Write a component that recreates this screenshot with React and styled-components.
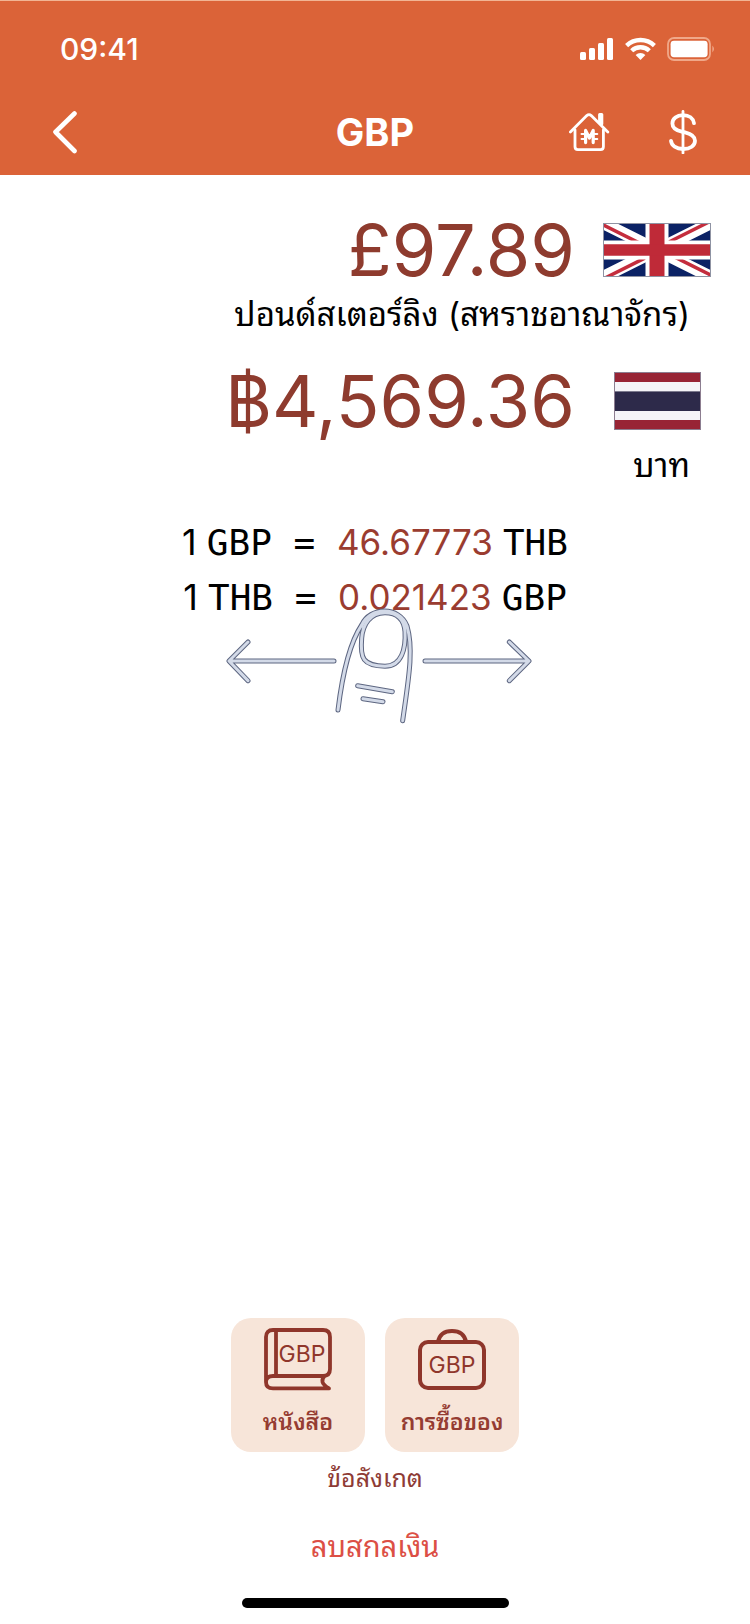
import React from "react"
import styled, { createGlobalStyle } from "styled-components"

const GlobalStyle = createGlobalStyle`
  * {
    box-sizing: border-box;
  }
  body {
    margin: 0;
    background: #fff;
    color: #000;
    font-family: Inter, "Noto Sans Thai Looped", "Noto Sans Thai", "Noto Sans", sans-serif;
  }
  button {
    padding: 0;
    border: 0;
    background: none;
    color: inherit;
    font: inherit;
    cursor: pointer;
  }
  svg {
    display: block;
  }
`;

const Screen = styled.div`
  display: flex;
  flex-direction: column;
  min-height: 100vh;
`;

const Header = styled.header`
  padding-bottom: 7px;
  border-top: 1px solid #f2b594;
  background: #db6338;
  color: #fff;
`;

const StatusBar = styled.div`
  display: flex;
  align-items: center;
  justify-content: space-between;
  height: 95px;
  padding: 0 34px 0 60px;
  font-size: 30px;
  font-weight: 500;
`;

const StatusIcons = styled.div`
  display: flex;
  align-items: center;
  gap: 11px;
`;

const NavBar = styled.nav`
  display: grid;
  grid-template-columns: 1fr auto 1fr;
  align-items: center;
  height: 72px;
  padding: 0 46px;
`;

const Title = styled.h1`
  margin: 0;
  font-size: 38px;
  line-height: 44px;
  font-weight: 700;
`;

const NavActions = styled.div`
  display: flex;
  align-items: center;
  justify-content: flex-end;
  gap: 58px;
`;

const IconButton = styled.button`
  justify-self: start;
  width: ${(props) => props.$width}px;
`;

const Main = styled.main`
  flex: 1;
  padding-top: 32px;
`;

const AmountBlock = styled.section`
  height: 151px;
  padding-right: 39px;
`;

const AmountRow = styled.div`
  display: flex;
  align-items: center;
  justify-content: flex-end;
  gap: 28px;
  height: 86px;
`;

const Amount = styled.div`
  color: #8e3b2e;
  font-size: 72px;
  line-height: 86px;
`;

const FlagSlot = styled.div`
  display: flex;
  justify-content: center;
  width: 108px;
`;

const CurrencyName = styled.p`
  margin: 0;
  padding-right: 21px;
  font-size: 33px;
  line-height: 42px;
  text-align: right;
`;

const Rates = styled.div`
  display: flex;
  flex-direction: column;
  align-items: center;
  gap: 34px;
  padding-top: 23px;
`;

const Rate = styled.p`
  margin: 0;
  font-size: 36px;
  line-height: 20px;
  white-space: pre;
`;

const Code = styled.span`
  font-family: "DejaVu Sans Mono", monospace;
`;

const RateValue = styled.span`
  color: #9a3c30;
  font-size: 35px;
`;

const Gesture = styled.div`
  display: flex;
  justify-content: center;
`;

const Footer = styled.footer`
  display: flex;
  flex-direction: column;
  align-items: center;
  padding-bottom: 16px;
`;

const Cards = styled.div`
  display: flex;
  gap: 20px;
`;

const Card = styled.button`
  display: flex;
  flex-direction: column;
  align-items: center;
  justify-content: space-between;
  width: 134px;
  height: 134px;
  border-radius: 20px;
  && {
    padding: 9px 0 13px;
    background: #f7e5d9;
    color: #953c32;
    font-size: 23px;
    line-height: 34px;
    font-weight: 600;
  }
`;

const TextButton = styled.button`
  && {
    color: ${(props) => props.$color};
    font-size: ${(props) => props.$size}px;
    line-height: 40px;
    margin-top: ${(props) => props.$top}px;
  }
`;

const HomeIndicator = styled.div`
  width: 267px;
  height: 10px;
  margin-top: 31px;
  border-radius: 5px;
  background: #000;
`;

const SignalIcon = () => (
  <svg width="34" height="24" viewBox="0 0 34 24" fill="#fff" aria-hidden="true">
    <rect x="0" y="15" width="6" height="8" rx="1.5" />
    <rect x="9" y="11" width="6" height="12" rx="1.5" />
    <rect x="18" y="6" width="6" height="17" rx="1.5" />
    <rect x="27" y="1" width="6" height="22" rx="1.5" />
  </svg>
);

const WifiIcon = () => (
  <svg width="31" height="24" viewBox="0 0 31 24" aria-hidden="true">
    <g fill="none" stroke="#fff" strokeWidth="4.4">
      <path d="M1.6 8.6 A20 20 0 0 1 29.4 8.6" />
      <path d="M6.7 13.8 A12.6 12.6 0 0 1 24.3 13.8" />
    </g>
    <path d="M10.6 18 A7.2 7.2 0 0 1 20.4 18 L15.5 23 Z" fill="#fff" />
  </svg>
);

const BatteryIcon = () => (
  <svg width="49" height="24" viewBox="0 0 49 24" aria-hidden="true">
    <rect x="1" y="1" width="42" height="22" rx="6" fill="none" stroke="#f0a889" strokeWidth="1.8" />
    <rect x="3.6" y="3.8" width="37" height="16.4" rx="3.4" fill="#fff" />
    <path d="M45.4 8.6 Q48.6 12 45.4 15.4 Z" fill="#f0a889" />
  </svg>
);

const BackIcon = () => (
  <svg width="36" height="44" viewBox="0 0 36 44" aria-hidden="true">
    <path d="M28.5 3.5 L9.5 22 L28.5 41" fill="none" stroke="#fff" strokeWidth="4.6" strokeLinecap="round" strokeLinejoin="round" />
  </svg>
);

const HomeIcon = () => (
  <svg width="42" height="40" viewBox="-1 0 42 40" fill="none" stroke="#fff" strokeLinecap="round" strokeLinejoin="round" aria-hidden="true">
    <path d="M1.4 20 L17.8 3.6 Q20 1.6 22.2 3.6 L38.8 20" strokeWidth="2.8" />
    <path d="M6 18 V34.8 Q6 37.6 8.8 37.6 H31.6 Q34.4 37.6 34.4 34.8 V18" strokeWidth="2.8" />
    <path d="M30.6 2.6 H32.8 V12 L30.6 10 Z" fill="#fff" strokeWidth="3" />
    <path d="M16.6 30.6 V18.4 L20.4 26 L24.2 18.4 V30.6" strokeWidth="3.2" />
    <path d="M12.6 22 H16 M12.6 27 H16 M25 22 H28.2 M25 27 H28.2" strokeWidth="2.2" />
  </svg>
);

const DollarIcon = () => (
  <svg width="30" height="44" viewBox="0 0 30 44" fill="none" stroke="#fff" strokeLinecap="round" aria-hidden="true">
    <path d="M26 13.2 C25.2 8.4 21 5.2 15 5.2 C8.8 5.2 4.4 8.6 4.4 13.4 C4.4 18 7.6 20.2 13.8 21.6 L17 22.4 C23.8 24 27 26.6 27 30.8 C27 35.8 22.2 39 15.2 39 C8.2 39 3.6 35.8 3 30.8" strokeWidth="3.8" />
    <path d="M15 1.5 V43" strokeWidth="2.8" />
  </svg>
);

const FlagUK = () => (
  <svg width="108" height="54" viewBox="0 0 108 54" role="img" aria-label="GBP">
    <rect width="108" height="54" fill="#0b2265" />
    <path d="M0 0 L108 54 M108 0 L0 54" stroke="#fff" strokeWidth="12" />
    <g stroke="#c42d3d" strokeWidth="3.6">
      <path d="M0 1.8 L50 26.8 M108 52.2 L58 27.2" />
      <path d="M106 -1 L54 25 M2 55 L54 29" />
    </g>
    <path d="M54 0 V54" stroke="#fff" strokeWidth="23" />
    <path d="M0 27 H108" stroke="#fff" strokeWidth="19" />
    <path d="M54 0 V54" stroke="#bf2a38" strokeWidth="15" />
    <path d="M0 27 H108" stroke="#bf2a38" strokeWidth="11.4" />
    <rect x="0.5" y="0.5" width="107" height="53" fill="none" stroke="#8f93a3" />
  </svg>
);

const FlagThailand = () => (
  <svg width="87" height="58" viewBox="0 0 87 58" role="img" aria-label="THB">
    <rect width="87" height="58" fill="#982435" />
    <rect y="10" width="87" height="38" fill="#f5f4f8" />
    <rect y="19.4" width="87" height="19.6" fill="#2d2a4a" />
    <rect x="0.5" y="0.5" width="86" height="57" fill="none" stroke="#8c7d90" />
  </svg>
);

// arrows, finger, nail and knuckle lines: stroked twice to get the outline
const swipeShape = (
  <>
    <path d="M522 453 H208 M264 396 L207 453 L264 512" />
    <path d="M795 453 H1106 M1048 396 L1107 453 L1048 512" />
    <path d="M534 600 C545 510 565 405 605 345 C630 289 718 288 741 348 C762 420 745 510 728 632" />
    <path d="M675 308 C630 308 608 345 605 385 C600 445 608 467 675 469 C725 469 738 415 735 365 C732 325 710 308 675 308 Z" />
    <path d="M593 527 L697 545 M609 566 L669 575" />
  </>
);

const SwipeHint = () => (
  <svg width="318" height="118" viewBox="168 294 954 354" fill="none" strokeLinecap="round" strokeLinejoin="round" aria-hidden="true">
    <g stroke="#5d6681" strokeWidth="15">{swipeShape}</g>
    <g stroke="#d3dae8" strokeWidth="9">{swipeShape}</g>
    <path d="M605 345 C630 289 718 288 741 348 L736 366 C732 325 710 308 675 308 C630 308 609 340 606 364 Z" fill="#d3dae8" />
  </svg>
);

const BookIcon = () => (
  <svg width="68" height="64" viewBox="0 0 68 64" fill="none" stroke="#8f362b" strokeWidth="3.8" strokeLinejoin="round" aria-hidden="true">
    <path d="M2 55 V10 Q2 3 9 3 H59 Q66 3 66 10 V42 Q66 49 59 49 H9 Q2 49 2 55 Q2 61.4 9 61.4 H65 Q54 55 61 48.6" />
    <path d="M12 3 V49" />
    <text x="38" y="35" fontSize="23" fontWeight="400" textAnchor="middle" fill="#8f362b" stroke="none">GBP</text>
  </svg>
);

const BagIcon = () => (
  <svg width="68" height="64" viewBox="0 0 68 64" fill="none" stroke="#8f362b" strokeWidth="4" aria-hidden="true">
    <rect x="2" y="15" width="64" height="46" rx="8" />
    <path d="M20 15 Q22 4 34 4 Q46 4 48 15" />
    <text x="34" y="46" fontSize="23" fontWeight="400" textAnchor="middle" fill="#8f362b" stroke="none">GBP</text>
  </svg>
);

const AppHeader = () => (
  <Header>
    <StatusBar>
      <span>09:41</span>
      <StatusIcons>
        <SignalIcon />
        <WifiIcon />
        <BatteryIcon />
      </StatusIcons>
    </StatusBar>
    <NavBar>
      <IconButton $width={36} aria-label="Back"><BackIcon /></IconButton>
      <Title>GBP</Title>
      <NavActions>
        <IconButton $width={42} aria-label="Home currency"><HomeIcon /></IconButton>
        <IconButton $width={36} aria-label="Currency"><DollarIcon /></IconButton>
      </NavActions>
    </NavBar>
  </Header>
);

const amounts = [
  { value: "£97.89", name: "ปอนด์สเตอร์ลิง (สหราชอาณาจักร)", Flag: FlagUK },
  { value: "฿4,569.36", name: "บาท", Flag: FlagThailand },
];

const rates = [
  { from: "GBP", value: "46.67773", to: "THB" },
  { from: "THB", value: "0.021423", to: "GBP" },
];

const App = () => (
  <Screen>
    <GlobalStyle />
    <AppHeader />
    <Main>
      {amounts.map(({ value, name, Flag }) => (
        <AmountBlock key={name}>
          <AmountRow>
            <Amount>{value}</Amount>
            <FlagSlot><Flag /></FlagSlot>
          </AmountRow>
          <CurrencyName>{name}</CurrencyName>
        </AmountBlock>
      ))}
      <Rates>
        {rates.map((rate) => (
          <Rate key={rate.from}>
            1 <Code>{rate.from} = </Code>
            <RateValue>{rate.value}</RateValue> <Code>{rate.to}</Code>
          </Rate>
        ))}
      </Rates>
      <Gesture>
        <SwipeHint />
      </Gesture>
    </Main>
    <Footer>
      <Cards>
        <Card>
          <BookIcon />
          หนังสือ
        </Card>
        <Card>
          <BagIcon />
          การซื้อของ
        </Card>
      </Cards>
      <TextButton $color="#8e3b35" $size={25} $top={6}>ข้อสังเกต</TextButton>
      <TextButton $color="#dc4f45" $size={29} $top={29}>ลบสกลเงิน</TextButton>
      <HomeIndicator />
    </Footer>
  </Screen>
);

export default App
